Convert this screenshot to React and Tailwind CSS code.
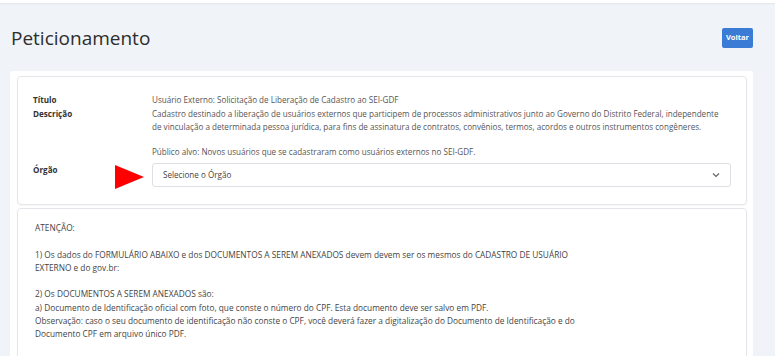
export default function App() {
  return (
    <div className="w-[775px] h-[356px] overflow-hidden bg-[#f0f3f7] font-['Open_Sans',sans-serif] relative">
      <div className="h-[3px] bg-white shadow-[0_1px_2px_rgba(0,0,0,0.06)]"></div>
      <div className="pl-[10px] pr-[22px]">
        <div className="flex items-center justify-between h-[68px] pb-[2px]">
          <h1 className="text-[19px] leading-none text-[#2d2d2d] pl-[1px] pt-[5px]">Peticionamento</h1>
          <button className="bg-[#3a7bd5] text-white text-[7.5px] font-bold rounded-[2px] w-[31px] h-[20px] mt-[4px] flex items-center justify-center">Voltar</button>
        </div>
        <div className="bg-white rounded-[3px] pt-[5px] pl-[7px] pr-[6px] pb-[4px]">
          <div className="border border-[#e3e6ea] rounded-[4px] shadow-[0_1px_2px_rgba(0,0,0,0.04)] pl-[15px] pr-[22px] pt-[16px] pb-[17px] text-[8.1px] leading-[13.5px]">
            <div className="flex">
              <div className="w-[119px] shrink-0 font-bold text-[#333]">Título</div>
              <div className="text-[#555]">Usuário Externo: Solicitação de Liberação de Cadastro ao SEI-GDF</div>
            </div>
            <div className="flex">
              <div className="w-[119px] shrink-0 font-bold text-[#333]">Descrição</div>
              <div className="text-[#555]">
                <p>Cadastro destinado a liberação de usuários externos que participem de processos administrativos junto ao Governo do Distrito Federal, independente de vinculação a determinada pessoa jurídica, para fins de assinatura de contratos, convênios, termos, acordos e outros instrumentos congêneres.</p>
                <p className="mt-[11px]">Público alvo: Novos usuários que se cadastraram como usuários externos no SEI-GDF.</p>
              </div>
            </div>
            <div className="flex mt-[5px]">
              <div className="w-[119px] shrink-0 font-bold text-[#333]">Órgão</div>
              <div className="flex-1 relative mr-[-7px]">
                <svg className="absolute left-[-37px] top-[2px]" width="29" height="24" viewBox="0 0 29 24"><polygon points="0,0 29,12 0,24" fill="#ff0000" /></svg>
                <div className="h-[24px] border border-[#dcdfe3] rounded-[3px] flex items-center justify-between pl-[10px] pr-[10px] text-[#444]">
                  <span>Selecione o Órgão</span>
                  <svg width="8" height="6" viewBox="0 0 8 6"><path d="M1 1.5 L4 4.5 L7 1.5" fill="none" stroke="#666" strokeWidth="1.2" /></svg>
                </div>
              </div>
            </div>
          </div>
          <div className="mt-[3px] border border-[#e3e6ea] rounded-[4px] shadow-[0_1px_2px_rgba(0,0,0,0.04)] pl-[17px] pr-[15px] pt-[12px] pb-[14px] text-[8.3px] leading-[13.3px] text-[#444]">
            <p>ATENÇÃO:</p>
            <div className="w-[562px]">
              <p className="mt-[13.3px]">1) Os dados do FORMULÁRIO ABAIXO e dos DOCUMENTOS A SEREM ANEXADOS devem devem ser os mesmos do CADASTRO DE USUÁRIO EXTERNO e do gov.br:</p>
              <p className="mt-[13.3px]">2) Os DOCUMENTOS A SEREM ANEXADOS são:</p>
              <p>a) Documento de Identificação oficial com foto, que conste o número do CPF. Esta documento deve ser salvo em PDF.</p>
              <p>Observação: caso o seu documento de identificação não conste o CPF, você deverá fazer a digitalização do Documento de Identificação e do Documento CPF em arquivo único PDF.</p>
              <p className="mt-[13.3px]">b) O Autorretrato com Documento de Identificação: é uma selfie do usuário externo segurando o documento de identificação com foto, abaixo do queixo.</p>
            </div>
          </div>
        </div>
      </div>
    </div>
  );
}
